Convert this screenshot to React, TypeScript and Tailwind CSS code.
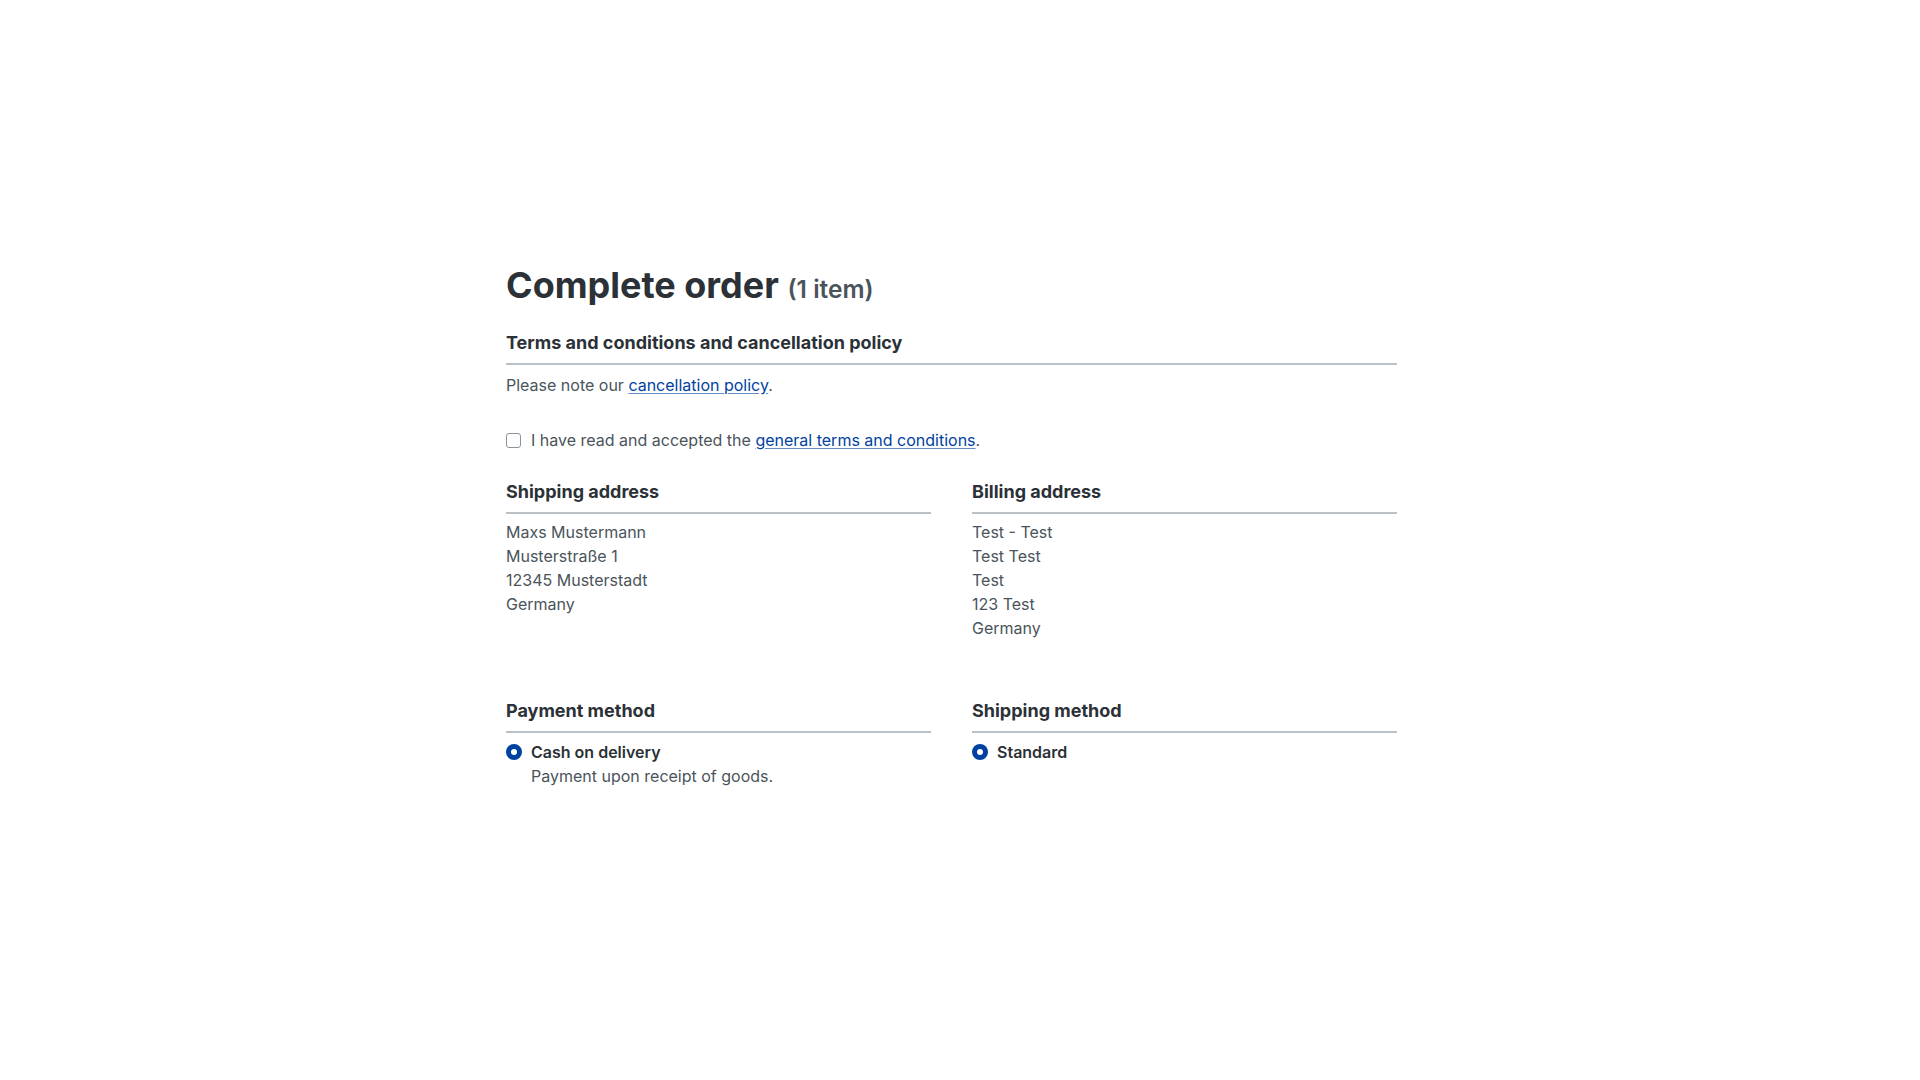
import React from 'react'

function SectionTitle({ children }: { children: React.ReactNode }) {
  return (
    <div className="border-b-2 border-[#bcc1c7] pb-[7px] text-[18px] font-bold leading-[27px] text-[#2b3136]">
      {children}
    </div>
  )
}

function Radio({ label, sub }: { label: string; sub?: string }) {
  return (
    <div className="mt-[7px] flex items-start gap-[9px]">
      <span className="mt-[4px] flex h-4 w-4 shrink-0 items-center justify-center rounded-full bg-[#0042a0]">
        <span className="h-[6px] w-[6px] rounded-full bg-white" />
      </span>
      <div>
        <div className="font-semibold text-[#2b3136]">{label}</div>
        {sub && <div>{sub}</div>}
      </div>
    </div>
  )
}

export default function App() {
  const shipping = ['Maxs Mustermann', 'Musterstraße 1', '12345 Musterstadt', 'Germany']
  const billing = ['Test - Test', 'Test Test', 'Test', '123 Test', 'Germany']

  return (
    <div className="min-h-[1080px] bg-white font-['Inter','Liberation_Sans',sans-serif] text-[16px] leading-6 text-[#4a545b]">
      <div className="ml-[506px] w-[891px] pt-[265px]">
        <h1 className="text-[36px] font-bold leading-[40px] text-[#2b3136]">
          Complete order <span className="text-[24.5px] font-semibold text-[#4a545b]">(1 item)</span>
        </h1>

        <div className="mt-[20px]">
          <SectionTitle>Terms and conditions and cancellation policy</SectionTitle>
          <p className="mt-[8px]">
            Please note our{' '}
            <a href="#" className="text-[#0042a0] underline decoration-[#0042a0]/60 underline-offset-2">
              cancellation policy
            </a>
            .
          </p>
          <label className="mt-[31px] flex items-center gap-[10px]">
            <span className="h-[15px] w-[15px] shrink-0 rounded-[3px] border border-[#8a949e] bg-white" />
            <span>
              I have read and accepted the{' '}
              <a href="#" className="text-[#0042a0] underline decoration-[#0042a0]/60 underline-offset-2">
                general terms and conditions
              </a>
              .
            </span>
          </label>
        </div>

        <div className="mt-[26px] grid grid-cols-2 gap-x-[41px]">
          <div>
            <SectionTitle>Shipping address</SectionTitle>
            <div className="mt-[6px]">
              {shipping.map((l) => (
                <div key={l}>{l}</div>
              ))}
            </div>
          </div>
          <div>
            <SectionTitle>Billing address</SectionTitle>
            <div className="mt-[6px]">
              {billing.map((l, i) => (
                <div key={i}>{l}</div>
              ))}
            </div>
          </div>
        </div>

        <div className="mt-[57px] grid grid-cols-2 gap-x-[41px]">
          <div>
            <SectionTitle>Payment method</SectionTitle>
            <Radio label="Cash on delivery" sub="Payment upon receipt of goods." />
          </div>
          <div>
            <SectionTitle>Shipping method</SectionTitle>
            <Radio label="Standard" />
          </div>
        </div>
      </div>
    </div>
  )
}
